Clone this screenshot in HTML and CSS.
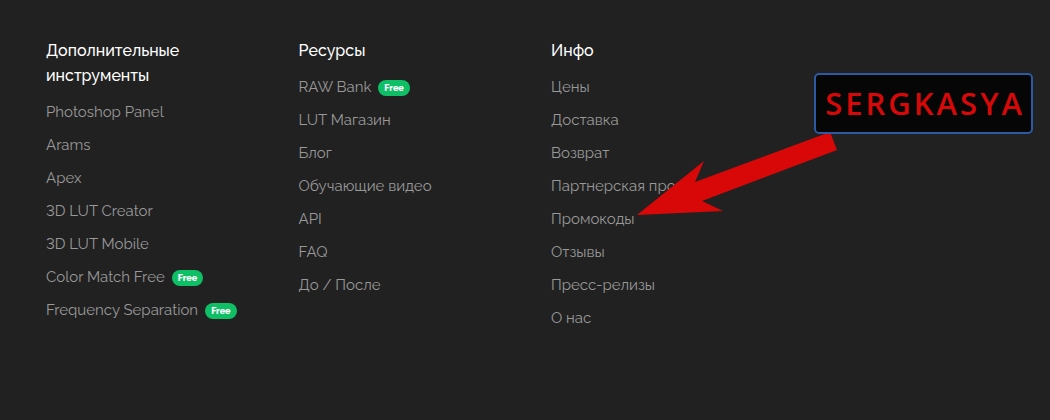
FILE: index.html
```html
<!DOCTYPE html>
<html lang="ru">
<head>
    <meta charset="UTF-8">
    <meta name="viewport" content="width=device-width, initial-scale=1.0">
    <title>Промокоды</title>
    <link rel="stylesheet" href="styles.css">
</head>
<body>

<footer class="footer">
    <nav class="footer-column">
        <h2>Дополнительные инструменты</h2>
        <ul>
            <li><a href="#">Photoshop Panel</a></li>
            <li><a href="#">Arams</a></li>
            <li><a href="#">Apex</a></li>
            <li><a href="#">3D LUT Creator</a></li>
            <li><a href="#">3D LUT Mobile</a></li>
            <li><a href="#">Color Match Free</a><span class="badge">Free</span></li>
            <li><a href="#">Frequency Separation</a><span class="badge">Free</span></li>
        </ul>
    </nav>

    <nav class="footer-column">
        <h2>Ресурсы</h2>
        <ul>
            <li><a href="#">RAW Bank</a><span class="badge">Free</span></li>
            <li><a href="#">LUT Магазин</a></li>
            <li><a href="#">Блог</a></li>
            <li><a href="#">Обучающие видео</a></li>
            <li><a href="#">API</a></li>
            <li><a href="#">FAQ</a></li>
            <li><a href="#">До / После</a></li>
        </ul>
    </nav>

    <nav class="footer-column">
        <h2>Инфо</h2>
        <ul>
            <li><a href="#">Цены</a></li>
            <li><a href="#">Доставка</a></li>
            <li><a href="#">Возврат</a></li>
            <li><a href="#">Партнерская программа</a></li>
            <li><a href="#">Промокоды</a></li>
            <li><a href="#">Отзывы</a></li>
            <li><a href="#">Пресс-релизы</a></li>
            <li><a href="#">О нас</a></li>
        </ul>
    </nav>

    <div class="callout">
        <svg class="callout-arrow" width="202" height="84" viewBox="0 0 202 84" aria-hidden="true">
            <polygon points="1,83 68,29 59,50 194,0 201,18 66,69 87,79"/>
        </svg>
        <span class="callout-label">SERGKASYA</span>
    </div>
</footer>

</body>
</html>
```
FILE: styles.css
```css
body {
    background-color: #212121;
    color: #999999;
    font-family: Raleway, Lato, sans-serif;
    font-size: 15px;
    font-variant-numeric: lining-nums;
    line-height: 25px;
    margin: 0;
}

.footer {
    position: relative;
    display: grid;
    grid-template-columns: repeat(4, 1fr);
    padding: 38px 20px;
}

.footer-column {
    padding: 0 10px 0 26px;
}

h2 {
    color: #ffffff;
    font-size: 16px;
    font-weight: 500;
    line-height: 25px;
    margin: 0 0 12px;
}

ul {
    list-style: none;
    margin: 0;
    padding: 0;
    display: flex;
    flex-direction: column;
    gap: 8px;
}

li {
    display: flex;
    align-items: center;
    gap: 7px;
    white-space: nowrap;
}

a {
    color: #999999;
    text-decoration: none;
}

a:hover {
    color: #ffffff;
}

.badge {
    background-color: #0fbf66;
    color: #ffffff;
    font-size: 9px;
    font-weight: 800;
    line-height: 16px;
    padding: 0 6px;
    border-radius: 8px;
}

/* Метка со стрелкой поверх колонок */
.callout {
    position: absolute;
    top: 73px;
    right: 17px;
}

.callout-arrow {
    position: absolute;
    top: 59px;
    right: 195px;
    fill: #d90808;
}

.callout-label {
    position: relative;
    display: block;
    background-color: #060606;
    border: 2px solid #2c59a3;
    border-radius: 5px;
    color: #d90808;
    font-family: "Open Sans", sans-serif;
    font-size: 31px;
    font-weight: 600;
    letter-spacing: 3px;
    line-height: 57px;
    padding: 0 6px 0 9px;
}
```
